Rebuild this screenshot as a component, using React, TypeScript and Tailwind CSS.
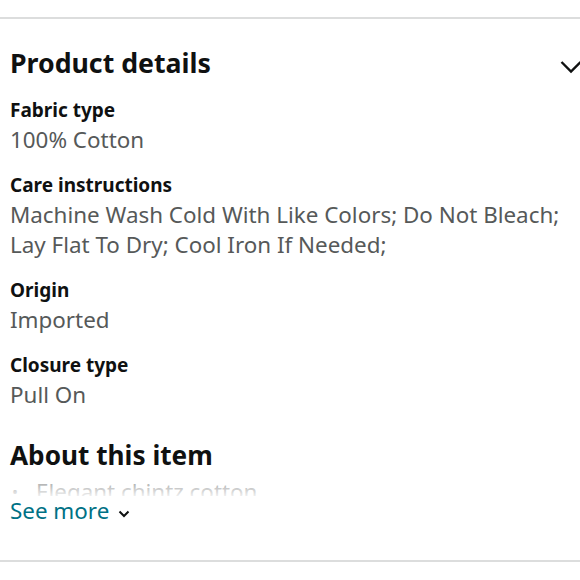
import React from "react";

const rows: { label: string; value: string[] }[] = [
  { label: "Fabric type", value: ["100% Cotton"] },
  {
    label: "Care instructions",
    value: ["Machine Wash Cold With Like Colors; Do Not Bleach;", "Lay Flat To Dry; Cool Iron If Needed;"],
  },
  { label: "Origin", value: ["Imported"] },
  { label: "Closure type", value: ["Pull On"] },
];

export default function App() {
  return (
    <div
      className="w-[580px] h-[580px] bg-white overflow-hidden"
      style={{ fontFamily: '"Noto Sans", "Open Sans", sans-serif' }}
    >
      <div className="h-[17px]" />
      <div className="h-[2px] bg-[#dcdddd]" />
      <div className="pl-[10px]">
        <div className="h-[24px]" />
        <div className="flex items-center justify-between h-[40px]">
          <div className="text-[26.7px] leading-[40px] font-bold text-[#0f1111]">Product details</div>
          <svg width="22" height="14" viewBox="0 0 22 14" className="mr-[-2px] mt-[8px]">
            <path d="M1.5 2 L11 11.5 L20.5 2" fill="none" stroke="#0f1111" strokeWidth="2.4" />
          </svg>
        </div>
        <div className="h-[12px]" />
        <div className="flex flex-col gap-[15px]">
          {rows.map((r) => (
            <div key={r.label}>
              <div className="text-[19px] leading-[30px] font-bold text-[#0f1111]">{r.label}</div>
              {r.value.map((v) => (
                <div key={v} className="text-[22.4px] leading-[30px] text-[#565959]">
                  {v}
                </div>
              ))}
            </div>
          ))}
        </div>
        <div className="h-[25px]" />
        <div className="text-[26.2px] leading-[40px] font-bold text-[#0f1111]">About this item</div>
        <div className="relative h-[21px] overflow-hidden">
          <div className="flex items-center gap-[18px] text-[22.4px] leading-[30px] text-[#565959] mt-[2px]">
            <span className="pl-[2px] text-[16px]">•</span>
            <span>Elegant chintz cotton</span>
          </div>
          <div className="absolute inset-0 bg-gradient-to-b from-white/30 to-white/90" />
        </div>
        <div className="flex items-center h-[30px]">
          <span className="text-[22.4px] leading-[30px] text-[#007185]">See more</span>
          <svg width="12" height="8" viewBox="0 0 12 8" className="ml-[9px] mt-[5px]">
            <path d="M1.5 1.5 L6 6 L10.5 1.5" fill="none" stroke="#0f1111" strokeWidth="2" />
          </svg>
        </div>
      </div>
      <div className="h-[34px]" />
      <div className="h-[2px] bg-[#dcdddd]" />
    </div>
  );
}
